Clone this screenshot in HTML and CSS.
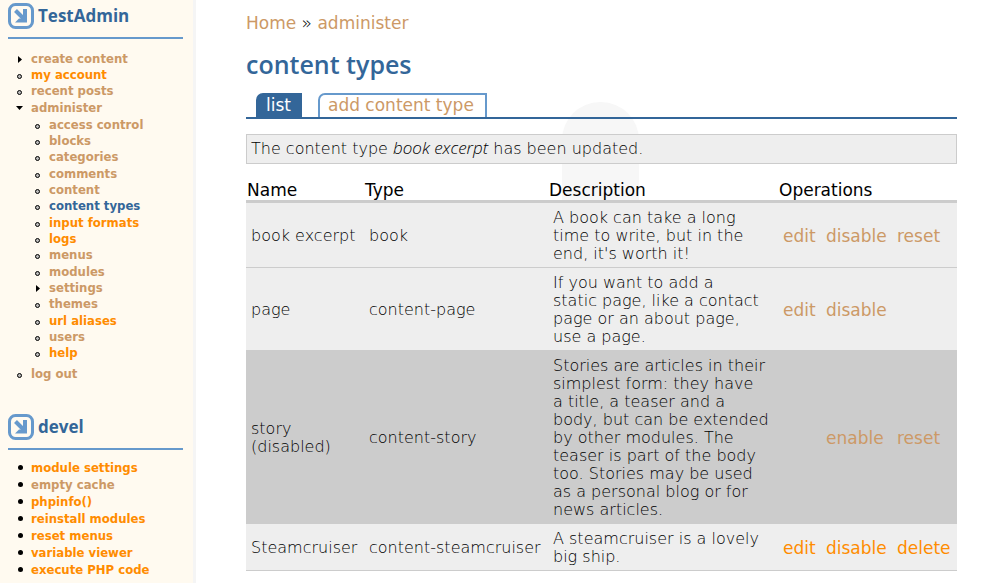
FILE: index.html
```html
<!DOCTYPE html>
<html lang="en">
<head>
  <meta charset="UTF-8" />
  <title>content types | TestAdmin</title>
  <link rel="stylesheet" href="styles.css">
</head>
<body>
  <div class="page">

    <!-- Sidebar -->
    <div class="sidebar">
      <div class="block">
        <h2>
          <svg class="block-icon" viewBox="0 0 26 26" width="26" height="26" aria-hidden="true">
            <rect x="1.5" y="1.5" width="23" height="23" rx="6" fill="#fffaf0" stroke="#6699cc" stroke-width="3" />
            <path d="M7.5 7.5L17 17" stroke="#6699cc" stroke-width="4" />
            <path d="M15 6H19V19.500H7L11 15.500H15Z" fill="#6699cc" />
          </svg>
          TestAdmin
        </h2>
        <ul class="menu">
          <li class="collapsed"><a href="#">create content</a></li>
          <li><a href="#" class="fresh">my account</a></li>
          <li><a href="#">recent posts</a></li>
          <li class="expanded"><a href="#">administer</a>
            <ul class="menu">
              <li><a href="#">access control</a></li>
              <li><a href="#">blocks</a></li>
              <li><a href="#">categories</a></li>
              <li><a href="#">comments</a></li>
              <li><a href="#">content</a></li>
              <li><a href="#" class="active">content types</a></li>
              <li><a href="#" class="fresh">input formats</a></li>
              <li><a href="#" class="fresh">logs</a></li>
              <li><a href="#">menus</a></li>
              <li><a href="#">modules</a></li>
              <li class="collapsed"><a href="#">settings</a></li>
              <li><a href="#">themes</a></li>
              <li><a href="#" class="fresh">url aliases</a></li>
              <li><a href="#">users</a></li>
              <li><a href="#" class="fresh">help</a></li>
            </ul>
          </li>
          <li><a href="#">log out</a></li>
        </ul>
      </div>

      <div class="block">
        <h2>
          <svg class="block-icon" viewBox="0 0 26 26" width="26" height="26" aria-hidden="true">
            <rect x="1.5" y="1.5" width="23" height="23" rx="6" fill="#fffaf0" stroke="#6699cc" stroke-width="3" />
            <path d="M7.5 7.5L17 17" stroke="#6699cc" stroke-width="4" />
            <path d="M15 6H19V19.500H7L11 15.500H15Z" fill="#6699cc" />
          </svg>
          devel
        </h2>
        <ul class="links">
          <li><a href="#" class="fresh">module settings</a></li>
          <li><a href="#">empty cache</a></li>
          <li><a href="#" class="fresh">phpinfo()</a></li>
          <li><a href="#" class="fresh">reinstall modules</a></li>
          <li><a href="#" class="fresh">reset menus</a></li>
          <li><a href="#" class="fresh">variable viewer</a></li>
          <li><a href="#" class="fresh">execute PHP code</a></li>
        </ul>
      </div>
    </div>

    <!-- Main content -->
    <div class="main">
      <div class="watermark"></div>
      <div class="breadcrumb"><a href="#">Home</a> » <a href="#">administer</a></div>
      <h1>content types</h1>

      <ul class="tabs">
        <li><a href="#" class="active">list</a></li>
        <li><a href="#">add content type</a></li>
      </ul>

      <div class="message">The content type <em>book excerpt</em> has been updated.</div>

      <table>
        <colgroup>
          <col class="col-name">
          <col class="col-type">
          <col class="col-desc">
          <col class="col-edit">
          <col class="col-toggle">
          <col>
        </colgroup>
        <thead>
          <tr>
            <th>Name</th>
            <th>Type</th>
            <th>Description</th>
            <th colspan="3">Operations</th>
          </tr>
        </thead>
        <tbody>
          <tr>
            <td>book excerpt</td>
            <td>book</td>
            <td>A book can take a long<br>time to write, but in the<br>end, it's worth it!</td>
            <td><a href="#">edit</a></td>
            <td><a href="#">disable</a></td>
            <td><a href="#">reset</a></td>
          </tr>
          <tr>
            <td>page</td>
            <td>content-page</td>
            <td>If you want to add a<br>static page, like a contact<br>page or an about page,<br>use a page.</td>
            <td><a href="#">edit</a></td>
            <td><a href="#">disable</a></td>
            <td></td>
          </tr>
          <tr class="disabled">
            <td>story (disabled)</td>
            <td>content-story</td>
            <td>Stories are articles in their<br>simplest form: they have<br>a title, a teaser and a<br>body, but can be extended<br>by other modules. The<br>teaser is part of the body<br>too. Stories may be used<br>as a personal blog or for<br>news articles.</td>
            <td></td>
            <td><a href="#">enable</a></td>
            <td><a href="#">reset</a></td>
          </tr>
          <tr>
            <td>Steamcruiser</td>
            <td>content-steamcruiser</td>
            <td>A steamcruiser is a lovely<br>big ship.</td>
            <td><a href="#" class="fresh">edit</a></td>
            <td><a href="#" class="fresh">disable</a></td>
            <td><a href="#" class="fresh">delete</a></td>
          </tr>
        </tbody>
      </table>
    </div>

  </div>
</body>
</html>
```

FILE: styles.css
```css
body {
  margin: 0;
  font-family: "DejaVu Sans", Verdana, sans-serif;
  font-size: 16px;
  font-weight: 200;
  line-height: 18px;
  color: #000;
  background: #fff;
}

a {
  color: #cc9966;
  font-weight: 400;
  text-decoration: none;
}

a.fresh {
  color: #ff8c00;
}

ul {
  margin: 0;
  padding: 0;
  list-style: none;
}

.page {
  display: flex;
  min-height: 100vh;
}

/* Sidebar */
.sidebar {
  box-sizing: border-box;
  flex: 0 0 196px;
  padding: 3px 10px 5px 8px;
  background: #fffaf0;
  border-right: 3px solid #f5f5f5;
  font-size: 13px;
  line-height: 16px;
}

.block + .block {
  margin-top: 32px;
}

.block h2 {
  display: flex;
  align-items: center;
  gap: 4px;
  margin: 0;
  padding-bottom: 8px;
  border-bottom: 2px solid #6699cc;
  color: #336699;
  font-family: "Open Sans", sans-serif;
  font-size: 17px;
  font-weight: 700;
  line-height: 26px;
}

.sidebar a {
  font-family: "DejaVu Sans Condensed", "DejaVu Sans", sans-serif;
  font-weight: 700;
}

.sidebar a.active {
  color: #336699;
}

.menu {
  padding: 12px 0 0 9px;
}

.menu li {
  padding-left: 14px;
}

.menu li:nth-child(3n) {
  margin-bottom: 1px;
}

.menu .menu {
  padding: 1px 0 4px 4px;
}

.menu li::before {
  content: "";
  display: inline-block;
  box-sizing: border-box;
  width: 5px;
  height: 5px;
  margin: 0 9px 0 -14px;
  border: 1px solid #000;
  border-radius: 50%;
  background: #bbb;
}

.menu li.collapsed::before {
  height: 7px;
  width: 4px;
  margin-right: 9px;
  margin-left: -13px;
  border: 0;
  border-radius: 0;
  background: #000;
  clip-path: polygon(0 0, 100% 50%, 0 100%);
}

.menu li.expanded::before {
  width: 7px;
  height: 4px;
  margin: 0 8px 2px -15px;
  border: 0;
  border-radius: 0;
  background: #000;
  clip-path: polygon(0 0, 100% 0, 50% 100%);
}

.links {
  padding: 9px 0 0 10px;
  line-height: 17px;
}

.links li {
  padding-left: 13px;
}

.links li::before {
  content: "";
  display: inline-block;
  width: 5px;
  height: 5px;
  margin: 0 8px 2px -13px;
  border-radius: 50%;
  background: #000;
}

/* Main content */
.main {
  position: relative;
  z-index: 0;
  flex: 1;
  padding: 14px 48px 12px 50px;
}

.watermark {
  position: absolute;
  z-index: -1;
  top: 102px;
  left: 366px;
  width: 77px;
  height: 160px;
  border-radius: 38px 38px 0 0;
  background: #f7f7f7;
}

.breadcrumb,
.tabs a,
td a,
th {
  font-size: 17px;
}

h1 {
  margin: 16px 0 13px;
  color: #336699;
  font-family: "Open Sans", sans-serif;
  font-size: 25px;
  font-weight: 600;
  line-height: 32px;
}

.tabs {
  display: flex;
  gap: 16px;
  padding-left: 10px;
  border-bottom: 2px solid #336699;
}

.tabs a {
  display: block;
  padding: 1px 11px 3px 8px;
  border: 2px solid #6699cc;
  border-bottom: 0;
  border-top-left-radius: 7px;
}

.tabs a.active {
  padding-right: 9px;
  border-color: #336699;
  background: #336699;
  color: #fff;
}

.message {
  margin: 15px 0 16px;
  padding: 5px 4px;
  border: 1px solid #ccc;
  background: #eee;
}

.message em {
  font-family: "Open Sans", sans-serif;
  font-size: 17px;
  font-weight: 300;
  line-height: 16px;
}

table {
  width: 100%;
  border-collapse: separate;
  border-spacing: 0;
  table-layout: fixed;
}

.col-name {
  width: 118px;
}

.col-type {
  width: 184px;
}

.col-desc {
  width: 230px;
}

.col-edit {
  width: 43px;
}

.col-toggle {
  width: 71px;
}

th {
  padding: 1px;
  border-bottom: 3px solid #ccc;
  font-weight: 400;
  text-align: left;
}

td {
  padding: 6px 3px 4px 5px;
  border-bottom: 1px solid #ccc;
  background: #eee;
}

tr.disabled td {
  background: #ccc;
}
```
